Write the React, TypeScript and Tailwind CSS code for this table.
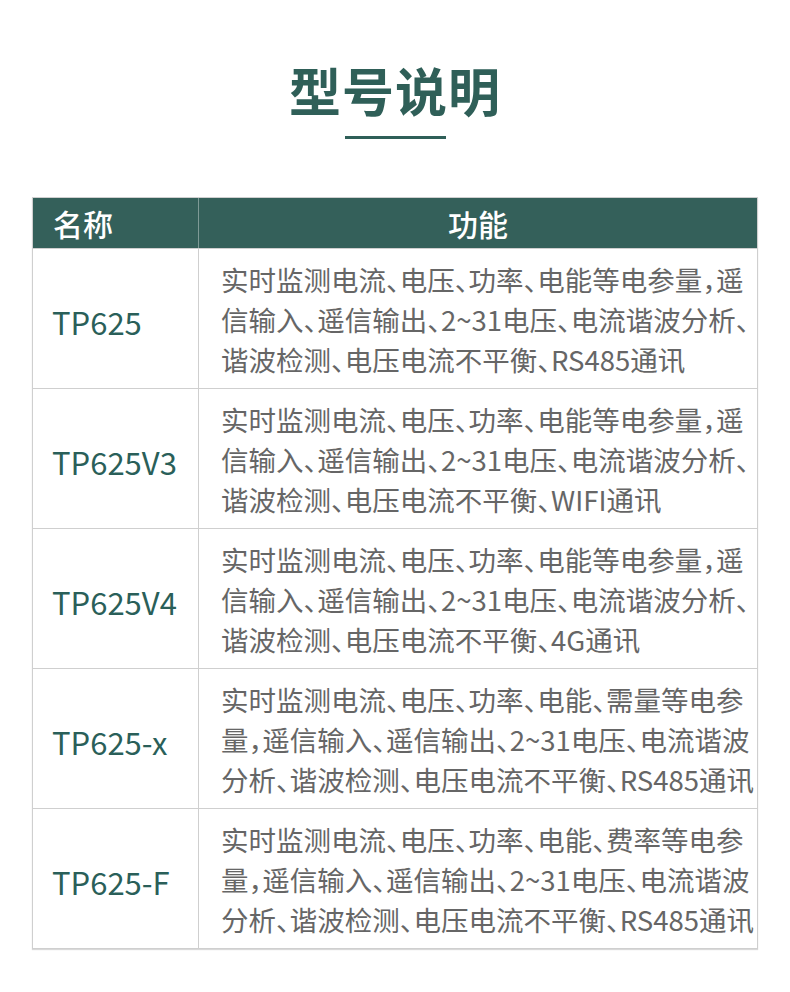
const rows = [
  {
    name: "TP625",
    lines: [
      "实时监测电流、电压、功率、电能等电参量，遥",
      "信输入、遥信输出、2~31电压、电流谐波分析、",
      "谐波检测、电压电流不平衡、RS485通讯",
    ],
  },
  {
    name: "TP625V3",
    lines: [
      "实时监测电流、电压、功率、电能等电参量，遥",
      "信输入、遥信输出、2~31电压、电流谐波分析、",
      "谐波检测、电压电流不平衡、WIFI通讯",
    ],
  },
  {
    name: "TP625V4",
    lines: [
      "实时监测电流、电压、功率、电能等电参量，遥",
      "信输入、遥信输出、2~31电压、电流谐波分析、",
      "谐波检测、电压电流不平衡、4G通讯",
    ],
  },
  {
    name: "TP625-x",
    lines: [
      "实时监测电流、电压、功率、电能、需量等电参",
      "量，遥信输入、遥信输出、2~31电压、电流谐波",
      "分析、谐波检测、电压电流不平衡、RS485通讯",
    ],
  },
  {
    name: "TP625-F",
    lines: [
      "实时监测电流、电压、功率、电能、费率等电参",
      "量，遥信输入、遥信输出、2~31电压、电流谐波",
      "分析、谐波检测、电压电流不平衡、RS485通讯",
    ],
  },
]

export default function App() {
  return (
    <div className="w-[790px] h-[992px] bg-white font-['Noto_Sans_CJK_SC',sans-serif] [font-feature-settings:'halt']">
      {/* Title */}
      <div className="flex flex-col items-center pt-[60px]">
        <h1 className="text-[52px] leading-[60px] font-bold text-[#2f5f58] tracking-[1px]">型号说明</h1>
        <div className="mt-4 w-[101px] h-[3px] bg-[#2f5f58]" />
      </div>

      {/* Table */}
      <div className="mx-8 mt-[58px] border border-[#cfcfcf] shadow-[0_1px_1px_rgba(0,0,0,0.15)]">
        <div className="grid grid-cols-[166px_1fr] h-[50px] bg-[#34605a] text-white text-[30px] font-medium">
          <div className="flex items-center pl-5 border-r border-[#7e9a96]">名称</div>
          <div className="flex items-center justify-center">功能</div>
        </div>
        {rows.map((row) => (
          <div key={row.name} className="grid grid-cols-[166px_1fr] h-[140px] border-t border-[#cfcfcf]">
            <div className="flex items-center pl-[19px] border-r border-[#cfcfcf] text-[31px] text-[#2a5f59] pt-2">
              {row.name}
            </div>
            <div className="flex flex-col justify-center pl-[22px] text-[27.5px] leading-[40px] text-[#666666]">
              {row.lines.map((line, i) => (
                <div key={i} className="whitespace-nowrap">
                  {line}
                </div>
              ))}
            </div>
          </div>
        ))}
      </div>
    </div>
  )
}
